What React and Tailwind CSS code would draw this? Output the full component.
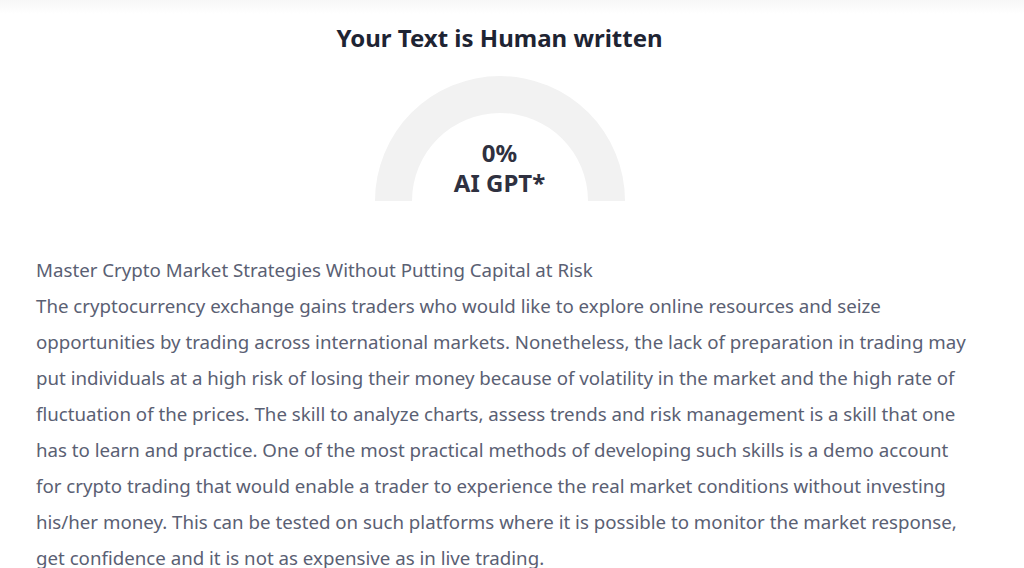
import React from 'react';

const paragraph =
  'The cryptocurrency exchange gains traders who would like to explore online resources and seize opportunities by trading across international markets. Nonetheless, the lack of preparation in trading may put individuals at a high risk of losing their money because of volatility in the market and the high rate of fluctuation of the prices. The skill to analyze charts, assess trends and risk management is a skill that one has to learn and practice. One of the most practical methods of developing such skills is a demo account for crypto trading that would enable a trader to experience the real market conditions without investing his/her money. This can be tested on such platforms where it is possible to monitor the market response, get confidence and it is not as expensive as in live trading.';

function Gauge({ value }) {
  return (
    <div className="relative w-[250px] h-[125px] mx-auto">
      <svg width="250" height="125" viewBox="0 0 250 125">
        <path d="M0 125 A125 125 0 0 1 250 125 L213 125 A88 88 0 0 0 37 125 Z" fill="#f2f2f2" />
      </svg>
      <div className="absolute inset-x-0 bottom-[3px] flex flex-col items-center text-[24px] font-bold leading-[30px] text-[#2f3140]">
        <span>{value}%</span>
        <span>AI GPT*</span>
      </div>
    </div>
  );
}

function App() {
  return (
    <div className="min-h-screen bg-white font-['Noto_Sans','Open_Sans',sans-serif] overflow-hidden">
      <div className="h-[14px] bg-gradient-to-b from-[#f7f7f7] to-white"></div>
      <div className="w-[999px]">
        <h1 className="mt-[8px] text-center text-[24px] font-bold leading-[32px] text-[#1e2433]">
          Your Text is Human written
        </h1>
        <div className="mt-[22px]">
          <Gauge value={0} />
        </div>
        <div className="mt-[51px] pl-[36px] pr-[29px] text-[18.7px] leading-[36px] text-[#5a6073]">
          <p>Master Crypto Market Strategies Without Putting Capital at Risk</p>
          <p>{paragraph}</p>
        </div>
      </div>
    </div>
  );
}

export default App;
